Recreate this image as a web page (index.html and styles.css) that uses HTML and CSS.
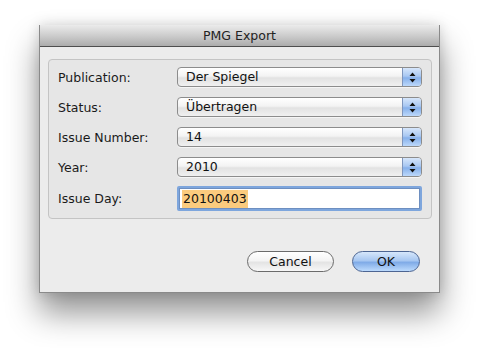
FILE: index.html
```html
<!DOCTYPE html>
<html lang="en">
<head>
    <meta charset="UTF-8">
    <title>PMG Export</title>
    <link rel="stylesheet" href="styles.css">
</head>
<body>
    <div class="sheet">
        <header class="title-bar">PMG Export</header>

        <main class="sheet-body">
            <section class="group-box">
                <div class="form-row">
                    <span class="form-label">Publication:</span>
                    <div class="popup">
                        <span class="popup-value">Der Spiegel</span>
                        <span class="popup-arrows">
                            <svg width="7" height="11" viewBox="0 0 7 11"><path d="M3.5 0.5 L6.5 4 L0.5 4 Z M0.5 7 L6.5 7 L3.5 10.5 Z" fill="#111"/></svg>
                        </span>
                    </div>
                </div>
                <div class="form-row">
                    <span class="form-label">Status:</span>
                    <div class="popup">
                        <span class="popup-value">Übertragen</span>
                        <span class="popup-arrows">
                            <svg width="7" height="11" viewBox="0 0 7 11"><path d="M3.5 0.5 L6.5 4 L0.5 4 Z M0.5 7 L6.5 7 L3.5 10.5 Z" fill="#111"/></svg>
                        </span>
                    </div>
                </div>
                <div class="form-row">
                    <span class="form-label">Issue Number:</span>
                    <div class="popup">
                        <span class="popup-value">14</span>
                        <span class="popup-arrows">
                            <svg width="7" height="11" viewBox="0 0 7 11"><path d="M3.5 0.5 L6.5 4 L0.5 4 Z M0.5 7 L6.5 7 L3.5 10.5 Z" fill="#111"/></svg>
                        </span>
                    </div>
                </div>
                <div class="form-row">
                    <span class="form-label">Year:</span>
                    <div class="popup">
                        <span class="popup-value">2010</span>
                        <span class="popup-arrows">
                            <svg width="7" height="11" viewBox="0 0 7 11"><path d="M3.5 0.5 L6.5 4 L0.5 4 Z M0.5 7 L6.5 7 L3.5 10.5 Z" fill="#111"/></svg>
                        </span>
                    </div>
                </div>
                <div class="form-row field-row">
                    <span class="form-label">Issue Day:</span>
                    <div class="text-field">
                        <span class="selected-text">20100403</span>
                    </div>
                </div>
            </section>

            <div class="button-row">
                <button class="push-button">Cancel</button>
                <button class="push-button default">OK</button>
            </div>
        </main>
    </div>
</body>
</html>
```

FILE: styles.css
```css
* {
    margin: 0;
    padding: 0;
    box-sizing: border-box;
}

body {
    font-family: 'DejaVu Sans', sans-serif;
    font-size: 12.5px;
    color: #111;
    background-color: white;
    width: 480px;
    height: 348px;
    overflow: hidden;
}

/* Dialog window */
.sheet {
    width: 401px;
    height: 268px;
    margin: 25px 0 0 39px;
    background-color: #ececec;
    border: 1px solid #8a8a8a;
    border-top: none;
    box-shadow: 0 20px 30px rgba(0, 0, 0, 0.42), 0 0 12px rgba(0, 0, 0, 0.15);
    display: flex;
    flex-direction: column;
}

.title-bar {
    height: 22px;
    background: linear-gradient(#ebebeb, #cdcdcd 50%, #acacac);
    border-bottom: 1px solid #4e4e4e;
    text-align: center;
    font-size: 12.5px;
    line-height: 22px;
    color: #222;
}

.sheet-body {
    padding: 12px 7px 0 8px;
}

/* Group box */
.group-box {
    height: 160px;
    border: 1px solid #c4c4c4;
    border-radius: 4px;
    background-color: #e6e6e6;
    padding: 7px 9px 0 9px;
    display: flex;
    flex-direction: column;
    gap: 10px;
}

.form-row {
    display: flex;
    align-items: center;
    height: 20px;
}

.field-row {
    height: 25px;
    margin-top: -1px;
}

.form-label {
    width: 119px;
    flex-shrink: 0;
    color: #1a1a1a;
}

/* Popup buttons */
.popup {
    flex: 1;
    height: 20px;
    display: flex;
    align-items: stretch;
    border: 1px solid #8c8c8c;
    border-radius: 4px;
    background: linear-gradient(#ffffff, #f3f3f3 45%, #e2e2e2 55%, #f0f0f0);
    box-shadow: 0 1px 0 rgba(255, 255, 255, 0.6);
    overflow: hidden;
}

.popup-value {
    flex: 1;
    padding-left: 8px;
    line-height: 18px;
}

.popup-arrows {
    width: 19px;
    display: flex;
    align-items: center;
    justify-content: center;
    background: linear-gradient(#d6e6fb, #a9c8f2 45%, #86b0ea 55%, #bcd8fb);
    border-left: 1px solid #7f96bd;
}

/* Text field */
.text-field {
    flex: 1;
    height: 25px;
    border: 2px solid #7ea6dd;
    border-radius: 2px;
    background-color: white;
    box-shadow: inset 0 0 0 1px #6e8fc0;
    padding: 0 0 0 3px;
    display: flex;
    align-items: center;
}

.selected-text {
    background-color: #fbcb7e;
    padding: 1px 1px;
    line-height: 16px;
}

/* Buttons */
.button-row {
    display: flex;
    justify-content: flex-end;
    gap: 18px;
    margin-top: 32px;
    padding-right: 12px;
}

.push-button {
    height: 21px;
    border: 1px solid #6b6b6b;
    border-radius: 11px;
    background: linear-gradient(#ffffff, #f4f4f4 45%, #e4e4e4 55%, #f7f7f7);
    font-family: 'DejaVu Sans', sans-serif;
    font-size: 12.5px;
    color: #111;
    width: 87px;
}

.push-button.default {
    width: 68px;
    border-color: #4d6592;
    background: linear-gradient(#d6e7fb, #a7c7f1 45%, #80abe7 55%, #bcdafd);
}
```
